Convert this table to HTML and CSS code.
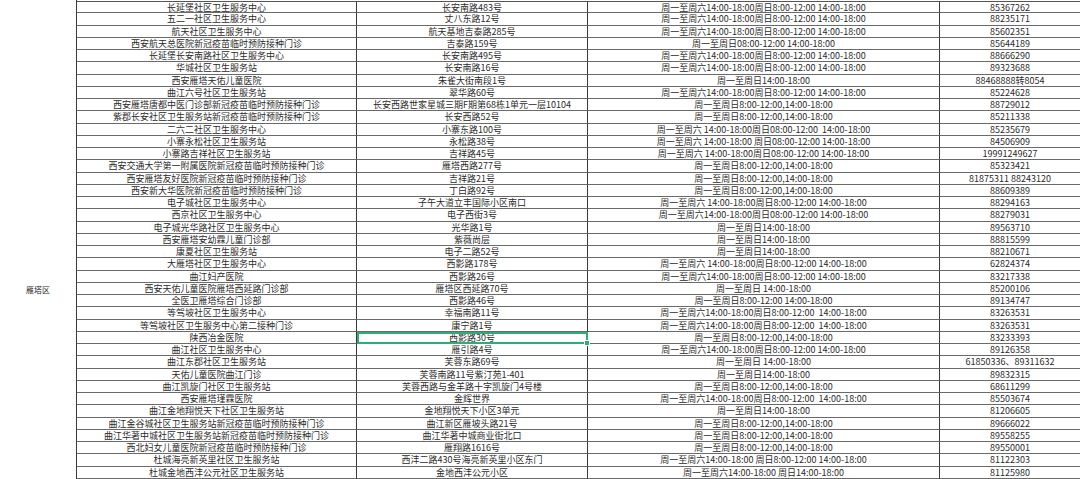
FILE: index.html
```html
<!DOCTYPE html>
<html lang="zh-CN">
<head>
<meta charset="utf-8">
<title>雁塔区接种点</title>
<link rel="stylesheet" href="styles.css">
</head>
<body>
<div class="sheet">
<div class="district">雁塔区</div>
<div class="c n">长延堡社区卫生服务中心</div><div class="c a">长安南路483号</div><div class="c h">周一至周六14:00-18:00周日8:00-12:00 14:00-18:00</div><div class="c p">85367262</div>
<div class="c n">五二一社区卫生服务中心</div><div class="c a">丈八东路12号</div><div class="c h">周一至周六14:00-18:00周日8:00-12:00 14:00-18:00</div><div class="c p">88235171</div>
<div class="c n">航天社区卫生服务中心</div><div class="c a">航天基地吉泰路285号</div><div class="c h">周一至周六14:00-18:00周日8:00-12:00 14:00-18:00</div><div class="c p">85602351</div>
<div class="c n">西安航天总医院新冠疫苗临时预防接种门诊</div><div class="c a">吉泰路159号</div><div class="c h">周一至周日08:00-12:00 14:00-18:00</div><div class="c p">85644189</div>
<div class="c n">长延堡长安南路社区卫生服务中心</div><div class="c a">长安南路495号</div><div class="c h">周一至周六14:00-18:00周日8:00-12:00 14:00-18:00</div><div class="c p">88666290</div>
<div class="c n">华城社区卫生服务站</div><div class="c a">长安南路16号</div><div class="c h">周一至周六14:00-18:00周日8:00-12:00 14:00-18:00</div><div class="c p">89323688</div>
<div class="c n">西安雁塔天佑儿童医院</div><div class="c a">朱雀大街南段1号</div><div class="c h">周一至周日14:00-18:00</div><div class="c p">88468888转8054</div>
<div class="c n">曲江六号社区卫生服务站</div><div class="c a">翠华路60号</div><div class="c h">周一至周六14:00-18:00周日8:00-12:00 14:00-18:00</div><div class="c p">85224628</div>
<div class="c n">西安雁塔唐都中医门诊部新冠疫苗临时预防接种门诊</div><div class="c a">长安西路世家星城三期F期第68栋1单元一层10104</div><div class="c h">周一至周日8:00-12:00,14:00-18:00</div><div class="c p">88729012</div>
<div class="c n">紫郡长安社区卫生服务站新冠疫苗临时预防接种门诊</div><div class="c a">长安西路52号</div><div class="c h">周一至周日8:00-12:00,14:00-18:00</div><div class="c p">85211338</div>
<div class="c n">二六二社区卫生服务中心</div><div class="c a">小寨东路100号</div><div class="c h">周一至周六 14:00-18:00周日08:00-12:00  14:00-18:00</div><div class="c p">85235679</div>
<div class="c n">小寨永松社区卫生服务站</div><div class="c a">永松路38号</div><div class="c h">周一至周六 14:00-18:00 周日08:00-12:00 14:00-18:00</div><div class="c p">84506909</div>
<div class="c n">小寨路吉祥社区卫生服务站</div><div class="c a">吉祥路45号</div><div class="c h">周一至周六 14:00-18:00周日08:00-12:00 14:00-18:00</div><div class="c p">19991249627</div>
<div class="c n">西安交通大学第一附属医院新冠疫苗临时预防接种门诊</div><div class="c a">雁塔西路277号</div><div class="c h">周一至周日8:00-12:00,14:00-18:00</div><div class="c p">85323421</div>
<div class="c n">西安雁塔友好医院新冠疫苗临时预防接种门诊</div><div class="c a">吉祥路21号</div><div class="c h">周一至周日8:00-12:00,14:00-18:00</div><div class="c p">81875311 88243120</div>
<div class="c n">西安新大华医院新冠疫苗临时预防接种门诊</div><div class="c a">丁白路92号</div><div class="c h">周一至周日8:00-12:00,14:00-18:00</div><div class="c p">88609389</div>
<div class="c n">电子城社区卫生服务中心</div><div class="c a">子午大道立丰国际小区南口</div><div class="c h">周一至周六 14:00-18:00周日8:00-12:00 14:00-18:00</div><div class="c p">88294163</div>
<div class="c n">西京社区卫生服务中心</div><div class="c a">电子西街3号</div><div class="c h">周一至周六14:00-18:00周日08:00-12:00 14:00-18:00</div><div class="c p">88279031</div>
<div class="c n">电子城光华路社区卫生服务中心</div><div class="c a">光华路1号</div><div class="c h">周一至周日14:00-18:00</div><div class="c p">89563710</div>
<div class="c n">西安雁塔安幼霖儿童门诊部</div><div class="c a">紫薇尚层</div><div class="c h">周一至周日14:00-18:00</div><div class="c p">88815599</div>
<div class="c n">康夏社区卫生服务站</div><div class="c a">电子二路52号</div><div class="c h">周一至周日14:00-18:00</div><div class="c p">88210671</div>
<div class="c n">大雁塔社区卫生服务中心</div><div class="c a">西影路178号</div><div class="c h">周一至周六 14:00-18:00周日8:00-12:00 14:00-18:00</div><div class="c p">62824374</div>
<div class="c n">曲江妇产医院</div><div class="c a">西影路26号</div><div class="c h">周一至周六14:00-18:00周日8:00-12:00 14:00-18:00</div><div class="c p">83217338</div>
<div class="c n">西安天佑儿童医院雁塔西延路门诊部</div><div class="c a">雁塔区西延路70号</div><div class="c h">周一至周日 14:00-18:00</div><div class="c p">85200106</div>
<div class="c n">全医卫雁塔综合门诊部</div><div class="c a">西影路46号</div><div class="c h">周一至周日8:00-12:00 14:00-18:00</div><div class="c p">89134747</div>
<div class="c n">等驾坡社区卫生服务中心</div><div class="c a">幸福南路11号</div><div class="c h">周一至周六14:00-18:00周日8:00-12:00  14:00-18:00</div><div class="c p">83263531</div>
<div class="c n">等驾坡社区卫生服务中心第二接种门诊</div><div class="c a">康宁路1号</div><div class="c h">周一至周六14:00-18:00周日8:00-12:00  14:00-18:00</div><div class="c p">83263531</div>
<div class="c n">陕西冶金医院</div><div class="c a sel">西影路30号</div><div class="c h">周一至周日8:00-12:00,14:00-18:00</div><div class="c p">83233393</div>
<div class="c n">曲江社区卫生服务中心</div><div class="c a">雁引路4号</div><div class="c h">周一至周六14:00-18:00周日8:00-12:00 14:00-18:00</div><div class="c p">89126358</div>
<div class="c n">曲江东郡社区卫生服务站</div><div class="c a">芙蓉东路69号</div><div class="c h">周一至周日 14:00-18:00</div><div class="c p">61850336、89311632</div>
<div class="c n">天佑儿童医院曲江门诊</div><div class="c a">芙蓉南路11号紫汀苑1-401</div><div class="c h">周一至周日14:00-18:00</div><div class="c p">89832315</div>
<div class="c n">曲江凯旋门社区卫生服务站</div><div class="c a">芙蓉西路与金羊路十字凯旋门4号楼</div><div class="c h">周一至周日8:00-12:00,14:00-18:00</div><div class="c p">68611299</div>
<div class="c n">西安雁塔瑾霖医院</div><div class="c a">金辉世界</div><div class="c h">周一至周六14:00-18:00周日8:00-12:00  14:00-18:00</div><div class="c p">85503674</div>
<div class="c n">曲江金地翔悦天下社区卫生服务站</div><div class="c a">金地翔悦天下小区3单元</div><div class="c h">周一至周日14:00-18:00</div><div class="c p">81206605</div>
<div class="c n">曲江金谷城社区卫生服务站新冠疫苗临时预防接种门诊</div><div class="c a">曲江新区雁坡头路21号</div><div class="c h">周一至周日8:00-12:00,14:00-18:00</div><div class="c p">89666022</div>
<div class="c n">曲江华著中城社区卫生服务站新冠疫苗临时预防接种门诊</div><div class="c a">曲江华著中城商业街北口</div><div class="c h">周一至周日8:00-12:00,14:00-18:00</div><div class="c p">89558255</div>
<div class="c n">西北妇女儿童医院新冠疫苗临时预防接种门诊</div><div class="c a">雁翔路1616号</div><div class="c h">周一至周日8:00-12:00,14:00-18:00</div><div class="c p">89550001</div>
<div class="c n">杜城海亮新英里社区卫生服务站</div><div class="c a">西沣二路430号海亮新英里小区东门</div><div class="c h">周一至周六14:00-18:00 周日8:00-12:00 14:00-18:00</div><div class="c p">81122303</div>
<div class="c n">杜城金地西沣公元社区卫生服务站</div><div class="c a">金地西沣公元小区</div><div class="c h">周一至周六14:00-18:00 周日14:00-18:00</div><div class="c p">81125980</div>
</div>
</body>
</html>
```

FILE: styles.css
```css
html, body {
  margin: 0;
  padding: 0;
  background: #ffffff;
}

.sheet {
  display: grid;
  grid-template-columns: 77px 280px 231px 352px 140px;
  grid-auto-rows: 12.25px;
  margin-top: 1px;
  width: 1080px;
  font-family: "Noto Sans CJK SC", "Noto Sans", sans-serif;
  font-size: 9px;
  color: #2b2b2b;
}

.district {
  grid-column: 1;
  grid-row: 1 / span 39;
  border-right: 1px solid #3a3a3a;
  display: flex;
  align-items: center;
  justify-content: center;
  padding-top: 100px;
  margin-top: -1px;
  font-size: 8px;
}

.c {
  box-sizing: border-box;
  display: flex;
  align-items: center;
  justify-content: center;
  white-space: pre;
  overflow: hidden;
  line-height: 11px;
  border-bottom: 1px solid #6a6a6a;
  border-right: 1px solid #3a3a3a;
  position: relative;
}

.sheet > .c:nth-child(-n+5) {
  border-top: 1px solid #555555;
}

.p {
  border-right: none;
}

.sel {
  outline: 2px solid #2fae74;
  outline-offset: -2px;
  overflow: visible;
  z-index: 2;
}

.sel::after {
  content: "";
  position: absolute;
  right: -3px;
  bottom: -3px;
  width: 4px;
  height: 4px;
  background: #2fae74;
  border: 1px solid #ffffff;
}
```
